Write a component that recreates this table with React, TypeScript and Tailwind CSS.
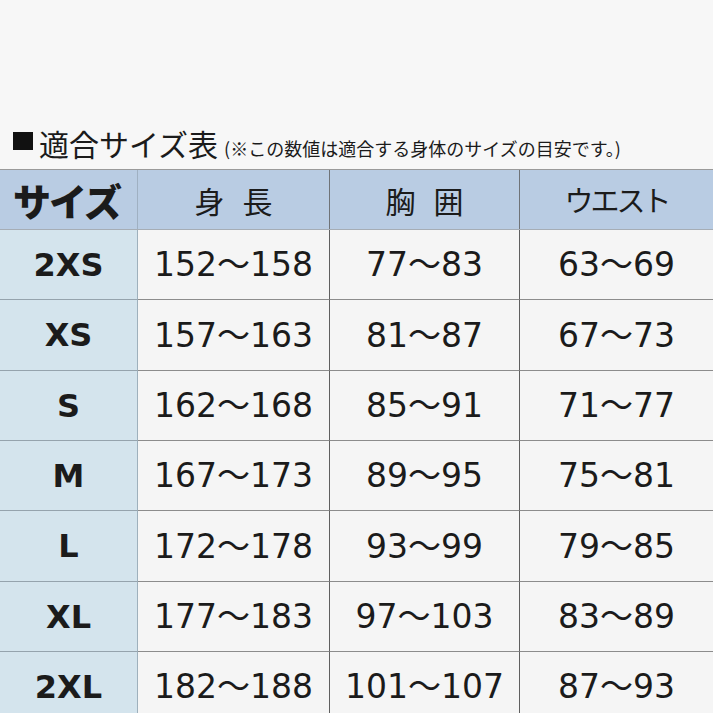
const rows = [
  { size: '2XS', h: '152〜158', c: '77〜83', w: '63〜69', ht: 'h-[70px]' },
  { size: 'XS', h: '157〜163', c: '81〜87', w: '67〜73', ht: 'h-[71px]' },
  { size: 'S', h: '162〜168', c: '85〜91', w: '71〜77', ht: 'h-[70px]' },
  { size: 'M', h: '167〜173', c: '89〜95', w: '75〜81', ht: 'h-[70px]' },
  { size: 'L', h: '172〜178', c: '93〜99', w: '79〜85', ht: 'h-[71px]' },
  { size: 'XL', h: '177〜183', c: '97〜103', w: '83〜89', ht: 'h-[70px]' },
  { size: '2XL', h: '182〜188', c: '101〜107', w: '87〜93', ht: 'h-[70px]' },
];

const jp = { fontFamily: '"Noto Sans CJK JP", "Noto Sans", sans-serif' };
const num = { fontFamily: '"DejaVu Sans", "Noto Sans CJK JP", sans-serif' };

export default function App() {
  return (
    <div className="h-[713px] w-[713px] overflow-hidden bg-[#f7f7f7] text-[#1b1b1b]">
      {/* タイトル */}
      <div className="flex h-[169px] items-end pb-[11px] pl-[13px]" style={jp}>
        <span className="mr-[6px] mb-[8px] inline-block h-[18px] w-[20px] bg-[#111]"></span>
        <span className="text-[30px] leading-none">適合サイズ表</span>
        <span className="ml-[6px] mb-[1px] text-[18px] leading-none tracking-[0px]">(※この数値は適合する身体のサイズの目安です。)</span>
      </div>

      {/* 表 */}
      <div className="border-t border-[#9a9a9a]">
        <div className="grid h-[60px] grid-cols-[138px_192px_190px_1fr] border-b border-[#a6adb5] bg-[#b9cce3]" style={jp}>
          <div className="flex items-center justify-center border-r border-[#9fb0c2] pr-[4px] text-[38px] font-black leading-none tracking-[-2px]">
            サイズ
          </div>
          <div className="flex items-center justify-center gap-[18px] border-r border-[#6f7378] text-[30px] leading-none">
            <span>身</span>
            <span>長</span>
          </div>
          <div className="flex items-center justify-center gap-[18px] border-r border-[#6f7378] text-[30px] leading-none">
            <span>胸</span>
            <span>囲</span>
          </div>
          <div className="flex items-center justify-center text-[29px] leading-none tracking-[-3px]">
            ウエスト
          </div>
        </div>

        {rows.map((r) => (
          <div key={r.size} className={`grid grid-cols-[138px_192px_190px_1fr] ${r.ht}`}>
            <div
              className="flex items-center justify-center border-r border-b border-r-[#9eb0bc] border-b-[#95a3ad] bg-[#d4e4ed] text-[32px] font-bold leading-none"
              style={num}
            >
              {r.size}
            </div>
            <div className="flex items-center justify-center border-r border-b border-r-[#5f5f5f] border-b-[#8c8c8c] bg-[#f5f5f5] text-[33px] leading-none" style={num}>
              {r.h}
            </div>
            <div className="flex items-center justify-center border-r border-b border-r-[#5f5f5f] border-b-[#8c8c8c] bg-[#f5f5f5] text-[33px] leading-none" style={num}>
              {r.c}
            </div>
            <div className="flex items-center justify-center border-b border-b-[#8c8c8c] bg-[#f5f5f5] text-[33px] leading-none" style={num}>
              {r.w}
            </div>
          </div>
        ))}
      </div>
    </div>
  );
}
